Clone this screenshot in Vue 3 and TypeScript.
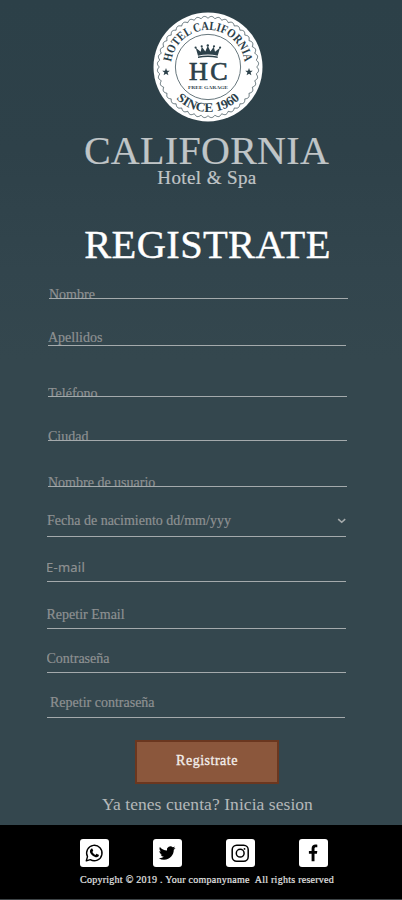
<script setup lang="ts">
interface Field {
  id: string
  label: string
  select?: boolean
}

const fields: Field[] = [
  { id: 'nombre', label: 'Nombre' },
  { id: 'apellidos', label: 'Apellidos' },
  { id: 'telefono', label: 'Teléfono' },
  { id: 'ciudad', label: 'Ciudad' },
  { id: 'usuario', label: 'Nombre de usuario' },
  { id: 'fecha', label: 'Fecha de nacimiento dd/mm/yyy', select: true },
  { id: 'email', label: 'E-mail' },
  { id: 'email-repeat', label: 'Repetir Email' },
  { id: 'clave', label: 'Contraseña' },
  { id: 'clave-repeat', label: 'Repetir contraseña' },
]

// Wavy ring of the badge, sampled around the circle.
function wavyRing(radius: number, depth: number, waves: number): string {
  const steps = waves * 10
  const points: string[] = []
  for (let i = 0; i < steps; i++) {
    const a = (i / steps) * Math.PI * 2
    const r = radius + depth * Math.abs(Math.sin((a * waves) / 2))
    points.push(`${(55 + r * Math.cos(a)).toFixed(2)} ${(55 + r * Math.sin(a)).toFixed(2)}`)
  }
  return `M${points.join('L')}Z`
}

const ring = wavyRing(48.7, 2, 44)
const star = 'M0-4 1-1.3 3.8-1.2 1.6.5 2.4 3.3 0 1.7-2.4 3.3-1.6.5-3.8-1.2-1-1.3Z'
</script>

<template>
  <div class="page">
    <header class="brand">
      <svg class="badge" viewBox="0 0 110 110">
        <defs>
          <path id="arc-top" d="M18 55A37 37 0 0 1 92 55" />
          <path id="arc-bottom" d="M10 55A45 45 0 0 0 100 55" />
        </defs>
        <circle cx="55" cy="55" r="54.5" fill="#fff" />
        <path :d="ring" fill="none" stroke="#40545c" stroke-width=".8" />
        <circle cx="55" cy="55" r="32.6" fill="none" stroke="#40545c" stroke-width=".8" />
        <text class="badge-text" font-size="12.3" text-anchor="middle">
          <textPath href="#arc-top" startOffset="50%" textLength="106" lengthAdjust="spacingAndGlyphs">HOTEL CALIFORNIA</textPath>
        </text>
        <text class="badge-text" font-size="13" text-anchor="middle">
          <textPath href="#arc-bottom" startOffset="50%" textLength="71" lengthAdjust="spacingAndGlyphs">SINCE 1960</textPath>
        </text>
        <path :d="star" transform="translate(13 60)" fill="#2c414a" />
        <path :d="star" transform="translate(96 60)" fill="#2c414a" />
        <g fill="#2c414a">
          <path d="M45 43.8 42.7 35.8 47.7 39.8 48.8 34.8 52.3 39.4 54.8 33.8 57.4 39.4 60.8 34.8 62 39.8 67 35.8 64.7 43.8Q55 41.4 45 43.8ZM45 44.6Q55 42.3 64.7 44.6V46Q55 43.8 45 46Z" />
          <circle cx="42.6" cy="35.6" r="1.1" />
          <circle cx="48.7" cy="34.3" r="1.1" />
          <circle cx="54.8" cy="33.4" r="1.2" />
          <circle cx="61" cy="34.3" r="1.1" />
          <circle cx="67.1" cy="35.6" r="1.1" />
        </g>
        <text class="badge-text badge-initials" x="36" y="68" font-size="26" textLength="38.5" lengthAdjust="spacing">HC</text>
        <text class="badge-text" x="35" y="76.8" font-size="5" textLength="40" lengthAdjust="spacingAndGlyphs">FREE GARAGE</text>
      </svg>
      <div class="brand-name">CALIFORNIA</div>
      <div class="brand-sub">Hotel &amp; Spa</div>
      <h1 class="title">REGISTRATE</h1>
    </header>

    <form class="form" @submit.prevent>
      <div v-for="f in fields" :key="f.id" class="field" :class="`field-${f.id}`">
        <span class="label">{{ f.label }}</span>
        <svg v-if="f.select" class="chevron" viewBox="0 0 10 6">
          <path d="M2.2 1.2 5.7 4.3 9.2 1.2" fill="none" stroke="#a5aaab" stroke-width="1.6" />
        </svg>
      </div>
      <button class="submit" type="submit">Registrate</button>
      <p class="login">Ya tenes cuenta? Inicia sesion</p>
    </form>

    <footer class="footer">
      <div class="social">
        <span class="tile">
          <svg viewBox="0 0 28 28">
            <path d="M6.3 21.8 7.5 17.6A7.7 7.7 0 1 1 10.3 20.6Z" fill="none" stroke="#000" stroke-width="1.4" stroke-linejoin="round" />
            <path d="M11.2 9.7c.4-.4 1-.4 1.2.1l.8 1.8c.1.4-.6 1-.8 1.3.7 1.5 1.8 2.4 3.2 3 .4-.4.8-1.2 1.3-1l1.8.9c.4.3.1 1.4-.4 1.8-1 .8-2.3.8-3.7.1-2.1-.9-3.7-2.5-4.5-4.3-.5-1.5.2-2.9 1.1-3.7Z" />
          </svg>
        </span>
        <span class="tile">
          <svg viewBox="0 0 28 28">
            <path transform="translate(5.8 5.7) scale(.695)" d="M23.95 4.57a10 10 0 0 1-2.82.77 4.96 4.96 0 0 0 2.16-2.72c-.95.55-2 .95-3.13 1.18a4.92 4.92 0 0 0-8.38 4.48C7.69 8.1 4.07 6.13 1.64 3.16a4.82 4.82 0 0 0-.67 2.48c0 1.71.87 3.21 2.19 4.1a4.9 4.9 0 0 1-2.23-.62v.06a4.92 4.92 0 0 0 3.95 4.83 5 5 0 0 1-2.21.08 4.94 4.94 0 0 0 4.6 3.42A9.87 9.87 0 0 1 0 19.54a13.99 13.99 0 0 0 7.55 2.21c9.05 0 14-7.5 14-13.98 0-.21 0-.42-.02-.63a9.94 9.94 0 0 0 2.46-2.55Z" />
          </svg>
        </span>
        <span class="tile">
          <svg viewBox="0 0 28 28" fill="none" stroke="#000" stroke-width="1.5">
            <rect x="6.2" y="6.2" width="16" height="16" rx="4.5" />
            <circle cx="14.2" cy="14.2" r="3.9" />
            <circle cx="18.5" cy="9.9" r=".9" fill="#000" stroke="none" />
          </svg>
        </span>
        <span class="tile">
          <svg viewBox="0 0 28 28">
            <path d="M12.6 22.2v-7.4H9.9v-2.9h2.7V9.6c0-2.6 1.6-4 4-4 .6 0 1.2 0 1.7.1v2.6h-1.2c-1.3 0-1.6.6-1.6 1.6v2h2.8l-.4 2.9h-2.4v7.4Z" />
          </svg>
        </span>
      </div>
      <div class="copyright">Copyright © 2019 . Your companyname&nbsp; All rights reserved</div>
    </footer>
  </div>
</template>

<style>
body {
  margin: 0;
  background: #34474e;
}
</style>

<style scoped>
.page {
  width: 402px;
  height: 900px;
  overflow: hidden;
  box-sizing: border-box;
  display: flex;
  flex-direction: column;
  font-family: "Liberation Serif", "Times New Roman", serif;
  background: linear-gradient(#2c4048 0, #2e4149 150px, #32454d 270px, #34474e 360px);
}
.brand {
  height: 270px;
  padding: 12px 0 0 11px;
  box-sizing: border-box;
  display: flex;
  flex-direction: column;
  align-items: center;
}
.badge {
  width: 110px;
  height: 110px;
  flex: none;
  padding-left: 2px;
}
.badge-text {
  font-family: "Liberation Serif", serif;
  font-weight: bold;
  fill: #2c414a;
}
.badge-initials {
  font-weight: normal;
  stroke: #2c414a;
  stroke-width: 0.7;
}
.brand-name {
  margin-top: 7px;
  font-size: 40px;
  line-height: 44px;
  letter-spacing: 0.3px;
  color: #c0c5c7;
  -webkit-text-stroke: 0.2px #c0c5c7;
}
.brand-sub {
  margin-top: -7px;
  padding-left: 1px;
  font-size: 19px;
  line-height: 24px;
  letter-spacing: 0.4px;
  color: #c0c5c7;
  -webkit-text-stroke: 0.2px #c0c5c7;
}
.title {
  margin: 33px 0 0;
  padding-left: 2px;
  font-size: 40.5px;
  line-height: 44px;
  font-weight: normal;
  letter-spacing: 0.35px;
  color: #fff;
  -webkit-text-stroke: 0.4px #fff;
}
.form {
  flex: 1;
  padding-left: 47px;
  display: flex;
  flex-direction: column;
  align-items: flex-start;
}
.field {
  width: 299px;
  flex: none;
  box-sizing: border-box;
  overflow: hidden;
  display: flex;
  justify-content: space-between;
  align-items: flex-start;
  border-bottom: 1px solid #a4aaac;
}
.label {
  font-size: 14px;
  line-height: 16px;
  white-space: nowrap;
  color: #8e9192;
  -webkit-text-stroke: 0.2px #8e9192;
}
.chevron {
  width: 10px;
  height: 6px;
  margin-top: 5px;
}
.field-nombre { height: 29px; padding-top: 17px; margin-left: 2px; }
.field-apellidos { height: 47px; padding-top: 31px; margin-left: 1px; width: 298px; }
.field-telefono { height: 51px; padding-top: 40px; margin-left: 1px; }
.field-ciudad { height: 44px; padding-top: 32px; margin-left: 1px; }
.field-usuario { height: 46px; padding-top: 34px; margin-left: 1px; }
.field-fecha { height: 50px; padding-top: 26px; }
.field-email { height: 45px; padding-top: 22px; }
.field-email-repeat { height: 47px; padding-top: 25px; }
.field-clave { height: 44px; padding-top: 22px; }
.field-clave-repeat { height: 45px; padding: 22px 0 0 3px; width: 298px; }
.field-email .label {
  margin-left: -1px;
  font-family: "Noto Sans", sans-serif;
  font-size: 13px;
  letter-spacing: 0.25px;
}
.field-email-repeat .label,
.field-clave .label {
  margin-left: -0.5px;
}
.submit {
  width: 144px;
  height: 44px;
  margin: 22px 0 0 88px;
  padding: 0 0 2px;
  border: 2px solid #6b371f;
  background: #8b573c;
  color: #f4efec;
  font-family: inherit;
  font-size: 14px;
  letter-spacing: 0.5px;
  -webkit-text-stroke: 0.3px #f4efec;
}
.login {
  margin: 10px 0 0 55px;
  font-size: 17.5px;
  line-height: 20px;
  letter-spacing: 0.06px;
  white-space: nowrap;
  color: #b4b8b9;
}
.footer {
  height: 75px;
  flex: none;
  box-sizing: border-box;
  padding: 14px 0 0 80px;
  background: #000;
  border-bottom: 1px solid #3e4447;
}
.social {
  display: flex;
  gap: 44.5px;
  padding-left: 0.4px;
}
.tile {
  width: 28.5px;
  height: 28px;
  border-radius: 3px;
  background: #fff;
}
.tile svg {
  display: block;
  width: 28px;
  height: 28px;
}
.copyright {
  margin-top: 6px;
  font-size: 10px;
  line-height: 14px;
  letter-spacing: 0.26px;
  white-space: nowrap;
  color: #e4e4e4;
  -webkit-text-stroke: 0.2px #e4e4e4;
}
</style>
